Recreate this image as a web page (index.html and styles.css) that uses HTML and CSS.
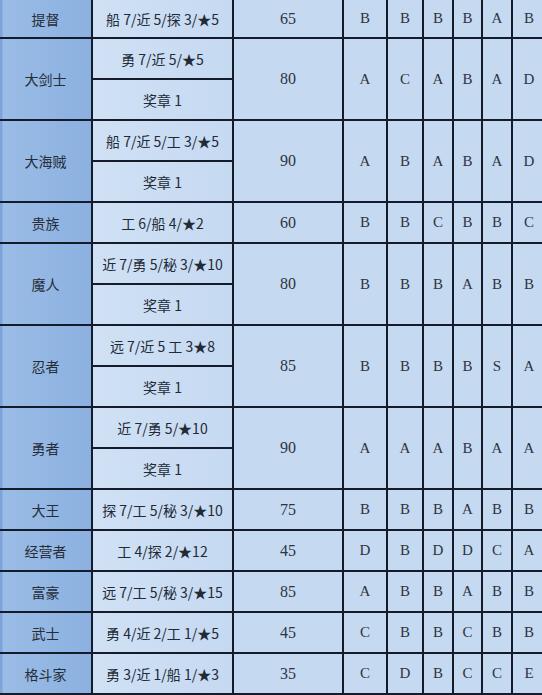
FILE: index.html
```html
<!DOCTYPE html>
<html lang="zh">
<head>
<meta charset="utf-8">
<link rel="stylesheet" href="styles.css">
</head>
<body>
<div class="sheet">
  <div class="name">提督</div><div class="req">船 7/近 5/探 3/★5</div><div class="num">65</div><div class="g">B</div><div class="g">B</div><div class="g">B</div><div class="g">B</div><div class="g">A</div><div class="g">B</div>

  <div class="name s2">大剑士</div><div class="req">勇 7/近 5/★5</div><div class="num s2">80</div><div class="g s2">A</div><div class="g s2">C</div><div class="g s2">A</div><div class="g s2">B</div><div class="g s2">A</div><div class="g s2">D</div>
  <div class="req">奖章 1</div>

  <div class="name s2">大海贼</div><div class="req">船 7/近 5/工 3/★5</div><div class="num s2">90</div><div class="g s2">A</div><div class="g s2">B</div><div class="g s2">A</div><div class="g s2">B</div><div class="g s2">A</div><div class="g s2">D</div>
  <div class="req">奖章 1</div>

  <div class="name">贵族</div><div class="req">工 6/船 4/★2</div><div class="num">60</div><div class="g">B</div><div class="g">B</div><div class="g">C</div><div class="g">B</div><div class="g">B</div><div class="g">C</div>

  <div class="name s2">魔人</div><div class="req">近 7/勇 5/秘 3/★10</div><div class="num s2">80</div><div class="g s2">B</div><div class="g s2">B</div><div class="g s2">B</div><div class="g s2">A</div><div class="g s2">B</div><div class="g s2">B</div>
  <div class="req">奖章 1</div>

  <div class="name s2">忍者</div><div class="req">远 7/近 5 工 3★8</div><div class="num s2">85</div><div class="g s2">B</div><div class="g s2">B</div><div class="g s2">B</div><div class="g s2">B</div><div class="g s2">S</div><div class="g s2">A</div>
  <div class="req">奖章 1</div>

  <div class="name s2">勇者</div><div class="req">近 7/勇 5/★10</div><div class="num s2">90</div><div class="g s2">A</div><div class="g s2">A</div><div class="g s2">A</div><div class="g s2">B</div><div class="g s2">A</div><div class="g s2">A</div>
  <div class="req">奖章 1</div>

  <div class="name">大王</div><div class="req">探 7/工 5/秘 3/★10</div><div class="num">75</div><div class="g">B</div><div class="g">B</div><div class="g">B</div><div class="g">A</div><div class="g">B</div><div class="g">B</div>

  <div class="name">经营者</div><div class="req">工 4/探 2/★12</div><div class="num">45</div><div class="g">D</div><div class="g">B</div><div class="g">D</div><div class="g">D</div><div class="g">C</div><div class="g">A</div>

  <div class="name">富豪</div><div class="req">远 7/工 5/秘 3/★15</div><div class="num">85</div><div class="g">A</div><div class="g">B</div><div class="g">B</div><div class="g">A</div><div class="g">B</div><div class="g">B</div>

  <div class="name">武士</div><div class="req">勇 4/近 2/工 1/★5</div><div class="num">45</div><div class="g">C</div><div class="g">B</div><div class="g">B</div><div class="g">C</div><div class="g">B</div><div class="g">B</div>

  <div class="name">格斗家</div><div class="req">勇 3/近 1/船 1/★3</div><div class="num">35</div><div class="g">C</div><div class="g">D</div><div class="g">B</div><div class="g">C</div><div class="g">C</div><div class="g">E</div>
</div>
</body>
</html>
```
FILE: styles.css
```css
html, body {
  margin: 0;
  padding: 0;
  background: #c5d9f1;
}
body {
  width: 542px;
  height: 695px;
  overflow: hidden;
}
.sheet {
  display: grid;
  grid-template-columns: 91px 139px 108px 42px 34px 28px 27px 28px 32px;
  grid-template-rows: 37px repeat(16, 39px);
  gap: 2px;
  padding-bottom: 2px;
  background: #141c2b;
  width: 543px;
  font-family: "Noto Sans CJK SC", "Noto Sans", sans-serif;
  font-size: 14px;
  color: #222;
}
.sheet > div {
  display: flex;
  align-items: center;
  justify-content: center;
  background: #c5d9f1;
  white-space: nowrap;
}
.s2 {
  grid-row: span 2;
}
.sheet > .name {
  background: linear-gradient(to right, #7ea4d8 0, #7ea4d8 2px, #9abce6 3px, #8cb1e0 100%);
  color: #262d38;
}
.sheet > .req {
  background: linear-gradient(to right, #d0e1f5, #c5d9f1);
  color: #222a36;
}
.num, .g {
  font-family: "Liberation Serif", "DejaVu Serif", serif;
  color: #2e3440;
}
.num {
  font-size: 16px;
}
.g {
  font-size: 15px;
}
```
